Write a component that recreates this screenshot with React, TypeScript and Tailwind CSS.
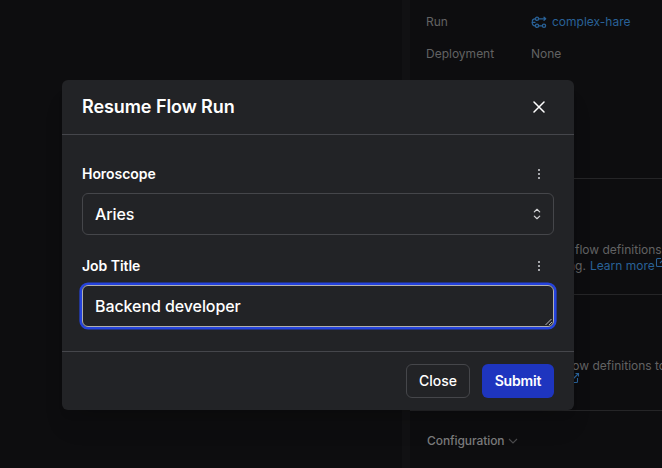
import React from "react";

function FlowRunIcon() {
  return (
    <svg className="h-[13px] w-[16px] shrink-0" viewBox="0 0 16 13" fill="none" stroke="currentColor" strokeWidth="1.3" strokeLinecap="round" strokeLinejoin="round">
      <circle cx="6" cy="2.8" r="1.6" />
      <circle cx="6" cy="9.8" r="1.6" />
      <circle cx="13" cy="9.8" r="1.6" />
      <path d="M4.4 2.8H4A2.7 2.7 0 0 0 1.3 5.3M1.3 7.3A2.7 2.7 0 0 0 4 9.8h.4M1 6.3h3M7.6 2.8h6.6M13 1.2 14.7 2.8 13 4.4M7.6 9.8h3.8" />
    </svg>
  );
}

function ExternalIcon() {
  return (
    <svg className="h-[12px] w-[12px] shrink-0" viewBox="0 0 12 12" fill="none" stroke="currentColor" strokeWidth="1.1">
      <path d="M6 2.5H2.5a1 1 0 0 0-1 1v6a1 1 0 0 0 1 1h6a1 1 0 0 0 1-1V6M7.5 1.5h3v3M10.5 1.5 5 7" />
    </svg>
  );
}

function Dots() {
  return (
    <div className="flex w-[30px] flex-col items-center gap-[2px]">
      <span className="h-[2px] w-[2px] bg-[#a5a6aa]" />
      <span className="h-[2px] w-[2px] bg-[#a5a6aa]" />
      <span className="h-[2px] w-[2px] bg-[#a5a6aa]" />
    </div>
  );
}

function Page() {
  return (
    <div className="flex h-full text-[12px] leading-4 text-[#626263]">
      <div className="w-[402px] shrink-0" />
      <div className="w-2 shrink-0 bg-[#111113]" />
      <div className="flex min-w-0 flex-1 flex-col whitespace-nowrap">
        <div className="flex h-[179px] flex-col gap-4 border-b border-[#252527] pt-[14px] pl-4">
          <div className="flex">
            <span className="w-[105px]">Run</span>
            <span className="flex items-center gap-[5px] text-[#296197]">
              <FlowRunIcon />
              complex-hare
            </span>
          </div>
          <div className="flex">
            <span className="w-[105px]">Deployment</span>
            <span>None</span>
          </div>
        </div>
        <div className="h-[116px] border-b border-[#252527] pt-[63px]">
          <div className="pl-[165px]">flow definitions</div>
          <div className="flex pl-[158px]">
            <span>ng.</span>
            <span className="ml-1 flex text-[#296197]">
              Learn more
              <span className="-mt-0.5">
                <ExternalIcon />
              </span>
            </span>
          </div>
        </div>
        <div className="h-[116px] border-b border-[#252527] pt-[63px]">
          <div className="pl-[155px]">flow definitions to</div>
          <div className="-mt-0.5 pl-[158px] text-[#296197]">
            <ExternalIcon />
          </div>
        </div>
        <div className="flex items-center gap-[3px] pt-[22px] pl-[17px] font-medium tracking-[-0.08px] text-[#7b7b7c]">
          Configuration
          <svg className="h-3 w-3" viewBox="0 0 12 12" fill="none" stroke="#4b4b4d" strokeWidth="1.1">
            <path d="m2 4 4 4 4-4" />
          </svg>
        </div>
      </div>
    </div>
  );
}

function Modal() {
  return (
    <div className="absolute top-20 left-[62px] flex h-[330px] w-[512px] flex-col rounded-md bg-[#222326] text-white shadow-xl">
      <header className="flex h-[55px] items-center justify-between border-b border-[#45464b] px-5">
        <h2 className="text-[18px] leading-7 font-semibold tracking-[-0.08px]">Resume Flow Run</h2>
        <button className="flex w-[30px] justify-center">
          <svg className="h-3 w-3" viewBox="0 0 12 12" stroke="white" strokeWidth="1.5" strokeLinecap="round">
            <path d="m1 1 10 10M11 1 1 11" />
          </svg>
        </button>
      </header>
      <div className="flex h-[216px] flex-col px-5 pt-[29px]">
        <div className="flex h-5 items-center justify-between">
          <label className="text-[14px] leading-5 font-semibold tracking-[-0.05px]">Horoscope</label>
          <Dots />
        </div>
        <div className="mt-[9px] flex h-[42px] items-center justify-between rounded-md border border-[#45464a] pr-3 pl-3 text-[16px] font-medium tracking-[-0.08px]">
          Aries
          <svg className="h-3 w-2" viewBox="0 0 8 12" fill="none" stroke="#d4d4d6" strokeWidth="1.2" strokeLinecap="round" strokeLinejoin="round">
            <path d="M1.3 3.9 4 1.3l2.7 2.6M1.3 8.1 4 10.7l2.7-2.6" />
          </svg>
        </div>
        <div className="mt-[21px] flex h-5 items-center justify-between">
          <label className="text-[14px] leading-5 font-semibold tracking-[-0.05px]">Job Title</label>
          <Dots />
        </div>
        <div className="mt-[9px] flex h-[42px] items-center justify-between rounded-md border border-[#b0b0b0] pl-3 text-[16px] font-medium tracking-[-0.08px] ring-[2.6px] ring-[#2543dc]">
          Backend developer
          <svg className="h-2 w-2 self-end" viewBox="0 0 8 8" fill="none" stroke="#b8b8ba" strokeWidth="1">
            <path d="M.5 7 6.5 1M4 7l3-3" />
          </svg>
        </div>
      </div>
      <footer className="flex flex-1 items-center justify-end gap-3 border-t border-[#45464b] px-5">
        <button className="h-[34px] w-16 rounded-md border border-[#45464a] pb-0.5 text-[14px] font-medium">Close</button>
        <button className="h-[34px] w-[72px] rounded-md bg-[#1e35bf] pb-0.5 text-[14px] font-semibold tracking-[-0.15px]">Submit</button>
      </footer>
    </div>
  );
}

export default function App() {
  return (
    <div className="relative h-[468px] w-[662px] overflow-hidden bg-[#0d0d0f] font-['Inter',sans-serif]">
      <Page />
      <Modal />
    </div>
  );
}
